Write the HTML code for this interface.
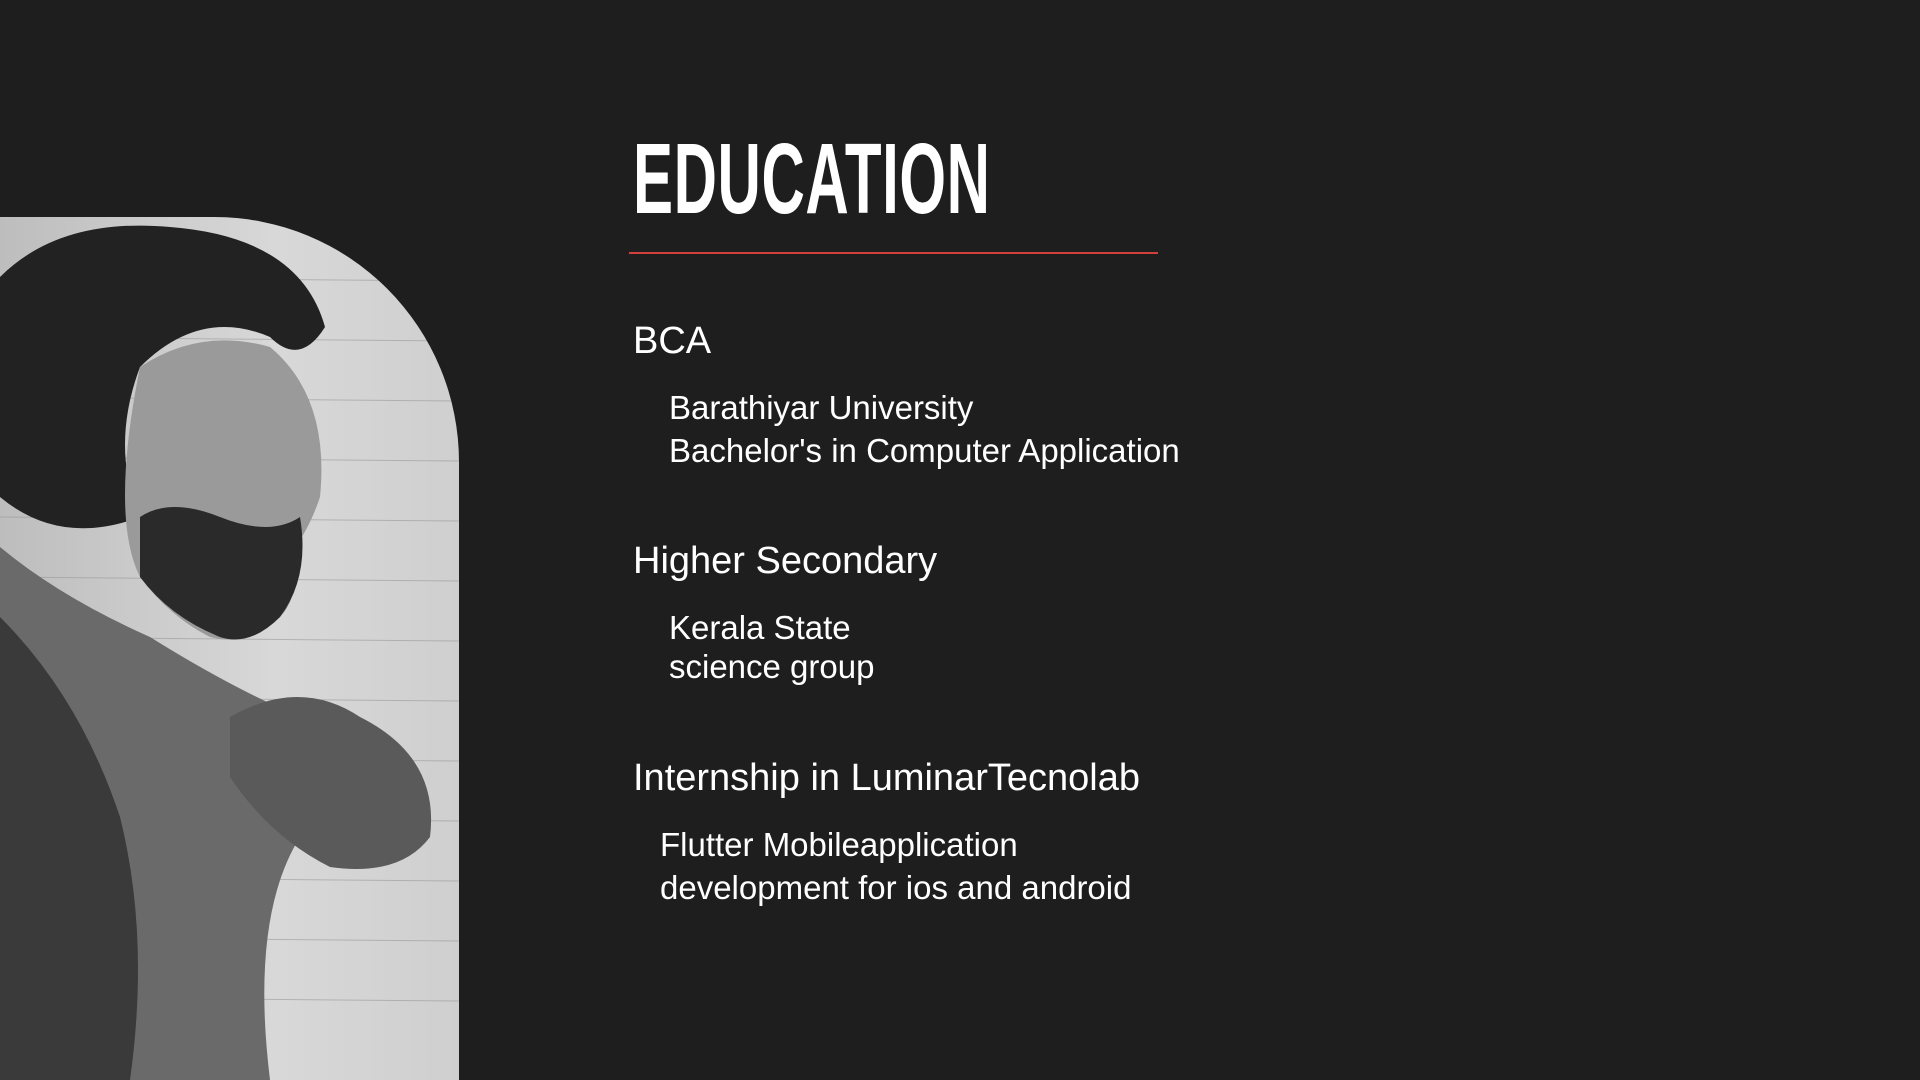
<!DOCTYPE html>
<html><head><meta charset="utf-8"><style>
html,body{margin:0;padding:0;width:1920px;height:1080px;background:#1e1e1e;overflow:hidden;font-family:"Liberation Sans",sans-serif;color:#fff}
.t{position:absolute;white-space:nowrap;line-height:1}
.h{font-size:38px}
.s{font-size:33px}
</style></head><body>
<div style="position:absolute;left:0;top:217px;width:459px;height:863px;border-top-right-radius:245px;overflow:hidden;background:linear-gradient(90deg,#bdbdbd,#d8d8d8 60%,#cfcfcf)">
<svg width="459" height="863" viewBox="0 0 459 863">
<g stroke="#999" stroke-width="1" opacity=".6">
<line x1="0" y1="60" x2="459" y2="64"/><line x1="0" y1="120" x2="459" y2="124"/><line x1="0" y1="180" x2="459" y2="184"/><line x1="0" y1="240" x2="459" y2="244"/><line x1="0" y1="300" x2="459" y2="304"/><line x1="0" y1="360" x2="459" y2="364"/><line x1="0" y1="420" x2="459" y2="424"/><line x1="0" y1="480" x2="459" y2="484"/><line x1="0" y1="540" x2="459" y2="544"/><line x1="0" y1="600" x2="459" y2="604"/><line x1="0" y1="660" x2="459" y2="664"/><line x1="0" y1="720" x2="459" y2="724"/><line x1="0" y1="780" x2="459" y2="784"/></g>
<path d="M0 60 Q60 0 170 10 Q300 20 325 110 Q300 150 270 120 Q200 90 140 150 Q110 230 140 300 Q60 330 0 280Z" fill="#222"/>
<path d="M140 150 Q200 110 270 130 Q330 180 320 280 Q310 310 295 330 Q300 380 280 400 Q250 430 210 420 Q170 400 140 360 Q110 300 140 150Z" fill="#9a9a9a"/>
<path d="M140 300 Q170 280 220 300 Q270 320 300 300 Q310 360 280 400 Q250 430 220 420 Q170 400 140 360Z" fill="#2a2a2a"/>
<path d="M0 330 Q60 380 150 420 Q230 470 300 500 Q340 560 300 620 Q250 700 270 863 L0 863Z" fill="#6a6a6a"/>
<path d="M0 400 Q80 480 120 600 Q150 720 130 863 L0 863Z" fill="#3a3a3a"/>
<path d="M230 500 Q300 460 360 500 Q440 540 430 620 Q400 660 330 650 Q270 620 230 560Z" fill="#5a5a5a"/>
</svg></div>
<div class="t" style="left:633px;top:129px;font-size:100px;font-weight:bold;transform:scaleX(0.6);transform-origin:left top;letter-spacing:1px">EDUCATION</div>
<div style="position:absolute;left:629px;top:252px;width:529px;height:2px;background:#d2403c"></div>
<div class="t h" style="left:633px;top:322px">BCA</div>
<div class="t s" style="left:669px;top:391px">Barathiyar University</div>
<div class="t s" style="left:669px;top:434px">Bachelor's in Computer Application</div>
<div class="t h" style="left:633px;top:542px">Higher Secondary</div>
<div class="t s" style="left:669px;top:611px">Kerala State</div>
<div class="t s" style="left:669px;top:650px">science group</div>
<div class="t h" style="left:633px;top:759px">Internship in LuminarTecnolab</div>
<div class="t s" style="left:660px;top:828px">Flutter Mobileapplication</div>
<div class="t s" style="left:660px;top:871px">development for ios and android</div>
</body></html>
